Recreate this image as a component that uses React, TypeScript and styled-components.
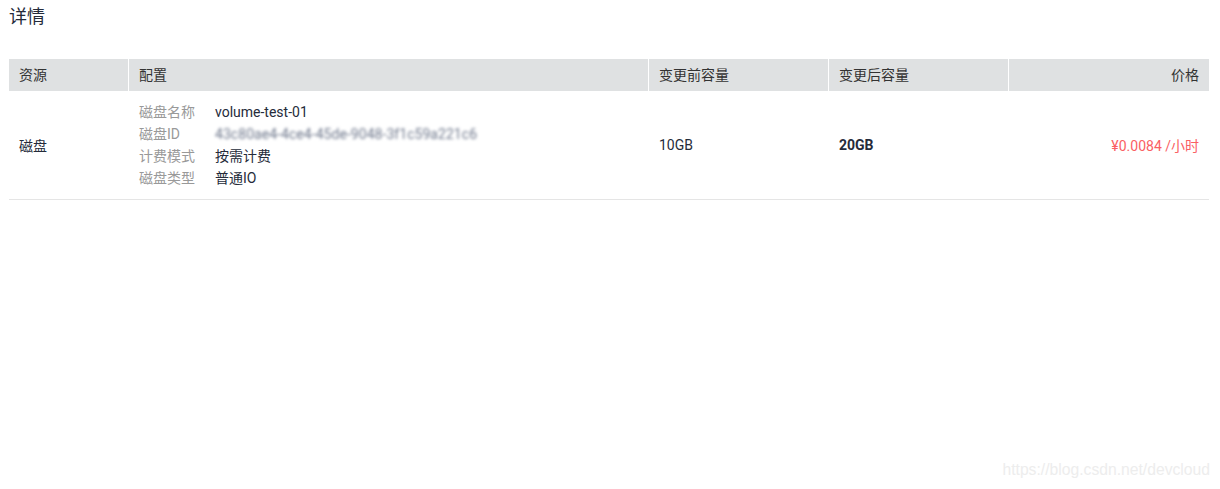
import React from 'react';
import styled, { createGlobalStyle } from 'styled-components';

const GlobalStyle = createGlobalStyle`
  html, body {
    margin: 0;
    padding: 0;
    background: #fff;
  }
  body {
    font-family: Roboto, "Noto Sans CJK SC", sans-serif;
    color: #252b3a;
  }
`;

const Page = styled.div`
  position: relative;
  width: 1220px;
  height: 489px;
  padding: 0 11px 0 9px;
  box-sizing: border-box;
`;

const Title = styled.h2`
  margin: 0;
  padding-top: 4px;
  height: 59px;
  box-sizing: border-box;
  font-size: 18px;
  line-height: 26px;
  font-weight: 400;
  color: #252b3a;
`;

const Table = styled.div`
  display: grid;
  grid-template-columns: 120px 520px 180px 180px 200px;
  width: 1200px;
`;

const HeadCell = styled.div<{ $right?: boolean; $last?: boolean }>`
  height: 32px;
  line-height: 32px;
  padding: 0 10px;
  box-sizing: border-box;
  background: #dfe1e2;
  border-right: ${({ $last }) => ($last ? 'none' : '1px solid #fff')};
  font-size: 14px;
  color: #333;
  text-align: ${({ $right }) => ($right ? 'right' : 'left')};
`;

const Cell = styled.div<{ $right?: boolean; $bold?: boolean; $price?: boolean }>`
  display: flex;
  align-items: center;
  justify-content: ${({ $right }) => ($right ? 'flex-end' : 'flex-start')};
  padding: 10px;
  box-sizing: border-box;
  border-bottom: 1px solid #e5e5e5;
  font-size: 14px;
  font-weight: ${({ $bold }) => ($bold ? 700 : 400)};
  color: ${({ $price }) => ($price ? '#fa5f63' : '#252b3a')};
`;

const ConfigList = styled.div`
  display: grid;
  grid-template-columns: 76px 1fr;
  line-height: 22px;
  font-size: 14px;
`;

const Label = styled.span`
  color: #999;
`;

const Value = styled.span`
  color: #252b3a;
`;

const Blurred = styled.span`
  color: #6f788c;
  filter: blur(1.4px);
  letter-spacing: 0.05px;
`;

const Watermark = styled.div`
  position: absolute;
  right: 10px;
  bottom: 10px;
  font-family: "Liberation Sans", Arial, sans-serif;
  font-size: 15.7px;
  color: #ededed;
`;

const configRows: { label: string; value: React.ReactNode }[] = [
  { label: '磁盘名称', value: <Value>volume-test-01</Value> },
  { label: '磁盘ID', value: <Blurred>43c80ae4-4ce4-45de-9048-3f1c59a221c6</Blurred> },
  { label: '计费模式', value: <Value>按需计费</Value> },
  { label: '磁盘类型', value: <Value>普通IO</Value> },
];

const App = (): JSX.Element => (
  <>
    <GlobalStyle />
    <Page>
      <Title>详情</Title>
      <Table>
        <HeadCell>资源</HeadCell>
        <HeadCell>配置</HeadCell>
        <HeadCell>变更前容量</HeadCell>
        <HeadCell>变更后容量</HeadCell>
        <HeadCell $right $last>
          价格
        </HeadCell>

        <Cell>磁盘</Cell>
        <Cell>
          <ConfigList>
            {configRows.map((row) => (
              <React.Fragment key={row.label}>
                <Label>{row.label}</Label>
                {row.value}
              </React.Fragment>
            ))}
          </ConfigList>
        </Cell>
        <Cell>10GB</Cell>
        <Cell $bold>20GB</Cell>
        <Cell $right $price>
          ¥0.0084 /小时
        </Cell>
      </Table>
      <Watermark>https://blog.csdn.net/devcloud</Watermark>
    </Page>
  </>
);

export default App;
